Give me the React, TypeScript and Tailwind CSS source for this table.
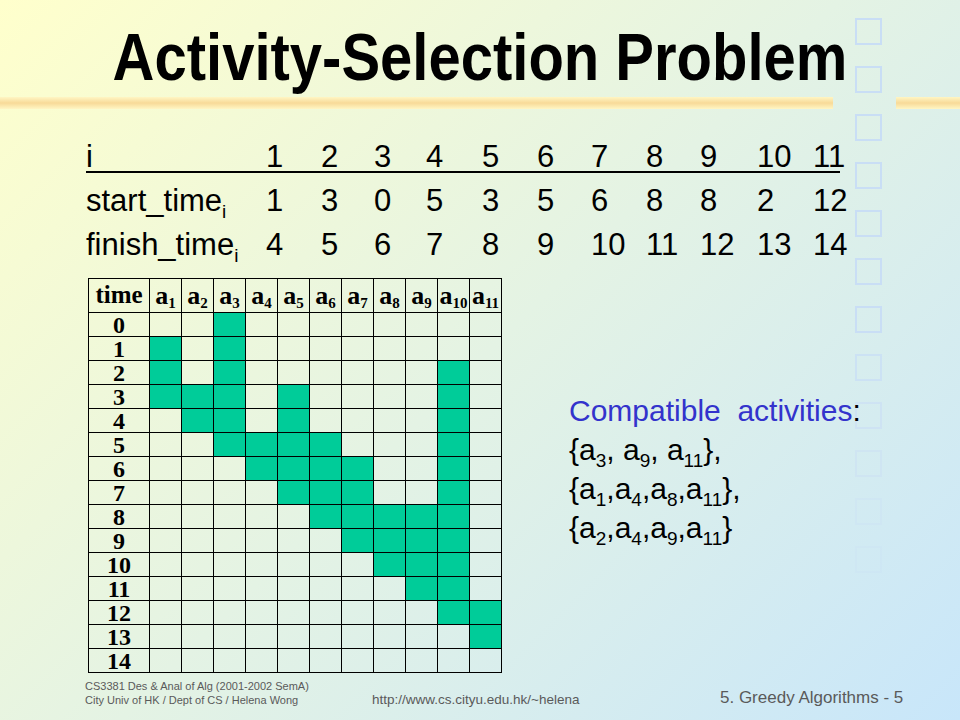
import { Fragment } from 'react';
import type { ReactNode } from 'react';

const starts = [1, 3, 0, 5, 3, 5, 6, 8, 8, 2, 12];
const finishes = [4, 5, 6, 7, 8, 9, 10, 11, 12, 13, 14];
const times = Array.from({ length: 15 }, (_, t) => t);

// decorative squares down the right edge, fading out lower down
const squareBorders = [
  'border-[#c9def5]',
  'border-[#c9def5]',
  'border-[#c9def5]',
  'border-[#c9def5]',
  'border-[#c9def5]',
  'border-[#c9def5]',
  'border-[#c9def5]',
  'border-[#c9def5]/80',
  'border-[#c9def5]/60',
  'border-[#c9def5]/45',
  'border-[#c9def5]/30',
  'border-[#c9def5]/20',
];

function Sub({ children }: { children: ReactNode }) {
  return <span className="relative top-[7px] text-[19px] leading-none">{children}</span>;
}

function TableRow({ label, values, className = '' }: { label: ReactNode; values: number[]; className?: string }) {
  return (
    <div
      className={`grid grid-cols-[180px_55px_53px_52px_56px_55px_54px_55px_54px_57px_56px_27px] whitespace-nowrap ${className}`}
    >
      <div>{label}</div>
      {values.map((v, i) => (
        <div key={i}>{v}</div>
      ))}
    </div>
  );
}

export default function App() {
  return (
    <div className="relative w-[960px] h-[720px] overflow-hidden bg-[linear-gradient(135deg,#ffffcc_0%,#e4f3e4_50%,#c8e6fa_100%)] font-['Liberation_Sans',Arial,sans-serif] text-black">
      {/* background decoration */}
      <div className="absolute left-0 top-[97px] h-[12px] w-[833px] bg-[linear-gradient(180deg,#fff6c4_0%,#f8da98_50%,#fff6c4_100%)]" />
      <div className="absolute left-[896px] top-[97px] h-[12px] w-[64px] bg-[linear-gradient(180deg,#fff6c4_0%,#f8da98_50%,#fff6c4_100%)]" />
      <div className="absolute left-[855px] top-[18px] flex flex-col gap-[21px]">
        {squareBorders.map((b, i) => (
          <div key={i} className={`h-[27px] w-[27px] border-2 ${b}`} />
        ))}
      </div>

      <div className="relative">
        <h1 className="origin-[50%_52px] scale-y-[1.15] pt-[24px] text-center text-[58px] font-bold leading-[64px]">
          Activity-Selection Problem
        </h1>

        <div className="ml-[86px] mt-[55px] w-[754px] text-[31px]">
          <TableRow
            label="i"
            values={starts.map((_, i) => i + 1)}
            className="h-[30px] border-b-2 border-black leading-[28px]"
          />
          <TableRow
            label={
              <>
                start_time<Sub>i</Sub>
              </>
            }
            values={starts}
            className="mt-[6px] leading-[44px]"
          />
          <TableRow
            label={
              <>
                finish_time<Sub>i</Sub>
              </>
            }
            values={finishes}
            className="leading-[44px]"
          />
        </div>

        <div className="mt-[11px] flex items-start">
          <div className="ml-[88px] grid grid-cols-[61px_repeat(11,32px)] border-l border-t border-black font-['Liberation_Serif','Times_New_Roman',serif] font-bold">
            <div className="h-[34px] border-r border-b border-black text-center text-[25px] leading-[32px]">time</div>
            {starts.map((_, i) => (
              <div
                key={i}
                className="flex h-[34px] items-baseline justify-center whitespace-nowrap border-r border-b border-black pt-[2px] leading-[30px]"
              >
                <span className="text-[26px]">a</span>
                <span className="relative top-[4px] text-[15px] leading-none">{i + 1}</span>
              </div>
            ))}
            {times.map((t) => (
              <Fragment key={t}>
                <div className="h-[24px] border-r border-b border-black text-center text-[24px] leading-[24px]">{t}</div>
                {starts.map((s, i) => (
                  <div
                    key={i}
                    className={`h-[24px] border-r border-b border-black ${s <= t && t < finishes[i] ? 'bg-[#00cc99]' : ''}`}
                  />
                ))}
              </Fragment>
            ))}
          </div>

          <div className="ml-[67px] mt-[113px] whitespace-nowrap text-[30px] leading-[39px]">
            <div>
              <span className="text-[#3333cc]">Compatible&nbsp; activities</span>:
            </div>
            <div>
              {'{'}a<Sub>3</Sub>, a<Sub>9</Sub>, a<Sub>11</Sub>{'}'},
            </div>
            <div>
              {'{'}a<Sub>1</Sub>,a<Sub>4</Sub>,a<Sub>8</Sub>,a<Sub>11</Sub>{'}'},
            </div>
            <div>
              {'{'}a<Sub>2</Sub>,a<Sub>4</Sub>,a<Sub>9</Sub>,a<Sub>11</Sub>{'}'}
            </div>
          </div>
        </div>

        <div className="mt-[6px] flex items-end whitespace-nowrap text-[#5a5a5a]">
          <div className="ml-[85px] w-[287px] text-[11px] leading-[14px]">
            <div>CS3381 Des &amp; Anal of Alg (2001-2002 SemA)</div>
            <div>City Univ of HK / Dept of CS / Helena Wong</div>
          </div>
          <div className="w-[348px] text-[13.5px] leading-[14px]">http://www.cs.cityu.edu.hk/~helena</div>
          <div className="text-[17px] leading-[18px]">5. Greedy Algorithms - 5</div>
        </div>
      </div>
    </div>
  );
}
